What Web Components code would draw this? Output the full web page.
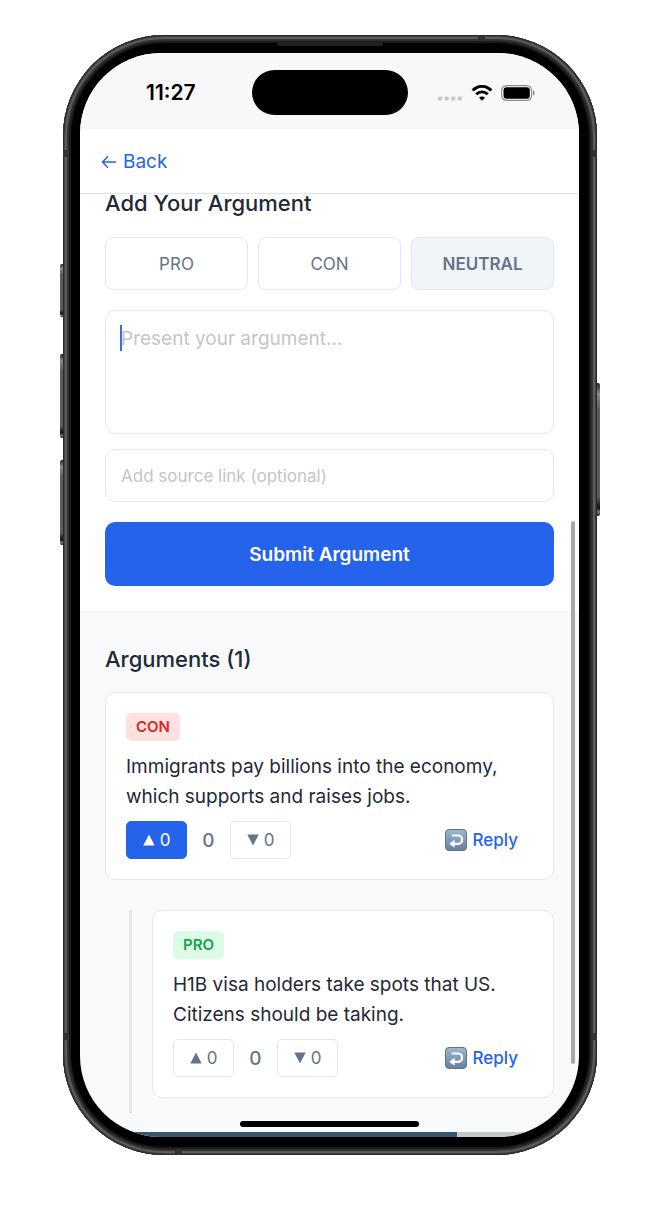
<!DOCTYPE html>
<html lang="en">
<head>
<meta charset="utf-8">
<meta name="viewport" content="width=device-width, initial-scale=1">
<title>Arguments</title>
<style>
  body {
    margin: 0;
    padding: 35px 67px 66px 63px;
    background: #fff;
    color: #1f2937;
    font-family: Inter, "Liberation Sans", sans-serif;
    font-size: 19px;
    --blue: #2563eb;
    --slate: #64748b;
    --line: #e5e7eb;
  }
</style>
</head>
<body>
<phone-frame>
  <status-bar time="11:27"></status-bar>
  <nav-header></nav-header>
  <argument-form></argument-form>
  <argument-list heading="Arguments (1)">
    <argument-card stance="CON" voted>Immigrants pay billions into the economy, which supports and raises jobs.</argument-card>
    <reply-thread>
      <argument-card stance="PRO">H1B visa holders take spots that US. Citizens should be taking.</argument-card>
    </reply-thread>
  </argument-list>
</phone-frame>

<script>
class Base extends HTMLElement {
  connectedCallback() {
    if (this.shadowRoot) return;
    this.attachShadow({ mode: "open" }).innerHTML =
      `<style>*{box-sizing:border-box}button,input,textarea{font-family:inherit;margin:0}${this.css()}</style>${this.html()}`;
  }
}

customElements.define("phone-frame", class extends Base {
  css() { return `
    :host { display: block; position: relative; }
    .key { position: absolute; width: 6px; border-radius: 2px; background: linear-gradient(#222, #8a8a86 8%, #5c5c59 20%, #5c5c59 85%, #111 94%, #777 97%, #222); }
    .left { left: -3px; }
    .right { right: -3px; }
    .k1 { top: 229px; height: 53px; }
    .k2 { top: 319px; height: 84px; }
    .k3 { top: 425px; height: 85px; }
    .k4 { top: 348px; height: 133px; }
    .metal { position: relative; border-radius: 101px; padding: 18px; padding-left: 17px; background: #000;
      box-shadow: inset 0 0 0 1px #2b2b2b, inset 0 0 0 2px #404040, inset 0 0 1px 4px #5e5e5e, inset 0 0 1px 6px #323232, inset 0 0 1px 8px #1c1c1c; }
    .speaker { position: absolute; top: 7px; left: 0; right: 0; margin: auto; width: 106px; height: 4px; border-radius: 2px; background: #222; }
    .band { position: absolute; background: #303235; }
    .v { width: 7px; height: 6px; }
    .h { width: 6px; height: 7px; }
    .screen { position: relative; display: flex; flex-direction: column; overflow: hidden; border-radius: 81px; background: #f8f9fb; }
    .next { height: 5px; margin-top: 19px; background: linear-gradient(90deg, #38566c 377px, #c3c8ca 377px); }
    .scroll { position: absolute; right: 4px; top: 468px; width: 4px; height: 543px; border-radius: 2px; background: #a8a8aa; }
    .home { position: absolute; bottom: 10px; left: 0; right: 0; margin: auto; width: 179px; height: 6px; border-radius: 3px; background: #000; }`; }
  html() { return `
    <span class="key left k1"></span><span class="key left k2"></span><span class="key left k3"></span><span class="key right k4"></span>
    <div class="metal">
      <span class="speaker"></span>
      <span class="band v" style="top:0;right:112px"></span><span class="band v" style="bottom:0;left:112px"></span>
      <span class="band h" style="left:0;top:115px"></span><span class="band h" style="right:0;top:115px"></span>
      <span class="band h" style="left:0;bottom:115px"></span><span class="band h" style="right:0;bottom:115px"></span>
      <div class="screen"><slot></slot><div class="next"></div><span class="scroll"></span><span class="home"></span></div>
    </div>`; }
});

customElements.define("status-bar", class extends Base {
  css() { return `
    :host { display: grid; grid-template-columns: 1fr 156px 1fr; align-items: center; padding: 17px 0 14px; background: #f8f8f8; color: #000; }
    time { padding-left: 66px; font-size: 21px; font-weight: 600; line-height: 24px; }
    .island { height: 45px; border-radius: 23px; background: #000; }
    .icons { display: flex; justify-content: flex-end; align-items: center; padding-right: 43px; gap: 8px; }
    svg { display: block; }
    .dots { align-self: end; }`; }
  html() { return `
    <time>${this.getAttribute("time")}</time><span class="island"></span>
    <span class="icons">
      <svg class="dots" width="26" height="6" fill="#c9c9c9"><circle cx="3" cy="3.500" r="2.3"/><circle cx="9.6" cy="3.500" r="2.3"/><circle cx="16.2" cy="3.500" r="2.3"/><circle cx="22.8" cy="3.500" r="2.3"/></svg>
      <svg width="22" height="16" viewBox="0 0 22 16" fill="none" stroke="#000" stroke-width="2.9"><path d="M1.6 5.6C7-.1 15-.1 20.4 5.6"/><path d="M5.2 9.3c3.4-3.3 8.2-3.3 11.6 0"/><path d="M11 15.8l-3-3.1c1.700-1.500 4.300-1.500 6 0z" fill="#000" stroke="none"/></svg>
      <svg width="35" height="16" viewBox="0 0 35 16"><rect x=".6" y=".6" width="30" height="14.800" rx="4.800" fill="none" stroke="#8c8c8c" stroke-width="1.100"/><rect x="2.500" y="2.300" width="26.300" height="11.400" rx="3" fill="#000"/><path d="M32 5.300c2.300.9 2.300 4.500 0 5.400z" fill="#8c8c8c"/></svg>
    </span>`; }
});

customElements.define("nav-header", class extends Base {
  css() { return `
    :host { display: flex; align-items: center; height: 65px; box-sizing: border-box; padding: 2px 21px 0; background: #fff; border-bottom: 1px solid #e1e3e6; }
    a { display: flex; align-items: center; gap: 6px; color: var(--blue); font-size: 19px; line-height: 24px; text-decoration: none; }
    svg { display: block; }`; }
  html() { return `<a href="#back"><svg width="16" height="14" viewBox="0 0 16 14" fill="none" stroke="currentColor" stroke-width="1.500" stroke-linecap="round" stroke-linejoin="round"><path d="M14.500 7H1.500M6.500 1.800L1.500 7l5 5.200"/></svg>Back</a>`; }
});

customElements.define("argument-form", class extends Base {
  css() { return `
    :host { display: block; background: #fff; padding: 0 25px 25px; }
    form { display: flex; flex-direction: column; }
    h2 { margin: 0 0 25px; font-size: 22px; line-height: 18px; font-weight: 500; }
    .stances { display: grid; grid-template-columns: repeat(3, 1fr); gap: 10px; margin-bottom: 20px; }
    .stances button { height: 53px; border: 1px solid var(--line); border-radius: 8px; background: #fff; color: var(--slate); font-size: 17px; padding: 0; }
    .stances button[aria-pressed=true] { background: #f1f5f9; font-weight: 600; }
    .box { position: relative; display: flex; margin-bottom: 15px; }
    textarea, input { display: block; width: 100%; border: 1px solid var(--line); border-radius: 10px; background: #fff; color: #1f2937; padding: 13px 15px; outline: 0; resize: none; }
    textarea { height: 124px; font-size: 19px; line-height: 30px; }
    input { height: 53px; font-size: 17px; margin-bottom: 20px; }
    ::placeholder { color: #c5c5c7; opacity: 1; }
    .caret { position: absolute; left: 15px; top: 15px; width: 2px; height: 26px; background: #4169e1; }
    .submit { height: 64px; border: 0; border-radius: 10px; background: var(--blue); color: #fff; font-size: 19px; font-weight: 600; }`; }
  html() { return `<form>
    <h2>Add Your Argument</h2>
    <div class="stances"><button type="button" aria-pressed="false">PRO</button><button type="button" aria-pressed="false">CON</button><button type="button" aria-pressed="true">NEUTRAL</button></div>
    <div class="box"><textarea aria-label="Argument" placeholder="Present your argument..."></textarea><span class="caret"></span></div>
    <input type="url" aria-label="Source link" placeholder="Add source link (optional)">
    <button class="submit" type="button">Submit Argument</button>
  </form>`; }
});

customElements.define("argument-list", class extends Base {
  css() { return `
    :host { display: flex; flex-direction: column; gap: 30px; padding: 34px 25px 0; }
    h2 { margin: 0 0 -11px; font-size: 22px; line-height: 28px; font-weight: 500; }`; }
  html() { return `<h2>${this.getAttribute("heading")}</h2><slot></slot>`; }
});

customElements.define("reply-thread", class extends Base {
  css() { return `:host { display: block; margin-left: 24px; padding: 0 0 15px 20px; border-left: 3px solid #e5e7eb; }`; }
  html() { return `<slot></slot>`; }
});

customElements.define("vote-button", class extends Base {
  css() { return `
    button { display: flex; align-items: center; justify-content: center; gap: 5px; width: 61px; height: 38px; padding: 0; border: 1px solid var(--line); border-radius: 5px; background: #fff; color: var(--slate); font-size: 17px; }
    :host { display: block; }
    :host([active]) button { background: var(--blue); border-color: var(--blue); color: #fff; }
    svg { display: block; }`; }
  html() {
    const up = this.getAttribute("direction") === "up";
    return `<button type="button" aria-label="${up ? "Upvote" : "Downvote"}"><svg width="12" height="12" viewBox="0 0 12 12" fill="currentColor"><path d="${up ? "M6 .5L11.700 11.500H.3z" : "M6 11.500L.3.5h11.400z"}"/></svg>0</button>`; }
});

customElements.define("argument-card", class extends Base {
  css() { return `
    :host { display: block; background: #fff; border: 1px solid var(--line); border-radius: 10px; padding: 20px; }
    .badge { display: block; width: fit-content; padding: 0 10px; border-radius: 5px; font-size: 15px; line-height: 28px; font-weight: 600; }
    .CON { background: #fee2e2; color: #dc2626; }
    .PRO { background: #dcfce7; color: #16a34a; }
    p { margin: 11px 0 9px; font-size: 19px; line-height: 30px; }
    .row { display: flex; align-items: center; }
    .score { width: 43px; text-align: center; color: var(--slate); font-size: 19px; font-weight: 500; }
    .reply { display: flex; align-items: center; gap: 6px; margin-left: auto; padding: 0 15px; border: 0; background: none; color: var(--blue); font-size: 17px; line-height: 24px; font-weight: 500; }
    svg { display: block; }`; }
  html() {
    const s = this.getAttribute("stance");
    return `<span class="badge ${s}">${s}</span><p><slot></slot></p>
    <div class="row"><vote-button direction="up"${this.hasAttribute("voted") ? " active" : ""}></vote-button><span class="score">0</span><vote-button direction="down"></vote-button>
    <button class="reply" type="button"><svg width="22" height="22" viewBox="0 0 22 22"><defs><linearGradient id="g" x2="0" y2="1"><stop stop-color="#9db8d0"/><stop offset="1" stop-color="#64809c"/></linearGradient></defs><rect x=".5" y=".5" width="21" height="21" rx="3.500" fill="url(#g)" stroke="#5d7389"/><path d="M6.800 6.500h6.200c5.400 0 5.400 8.300 0 8.300H9" fill="none" stroke="#fff" stroke-width="2.200"/><path d="M4.300 14.800l5.300-4v8z" fill="#fff"/></svg>Reply</button></div>`; }
});
</script>
</body>
</html>
